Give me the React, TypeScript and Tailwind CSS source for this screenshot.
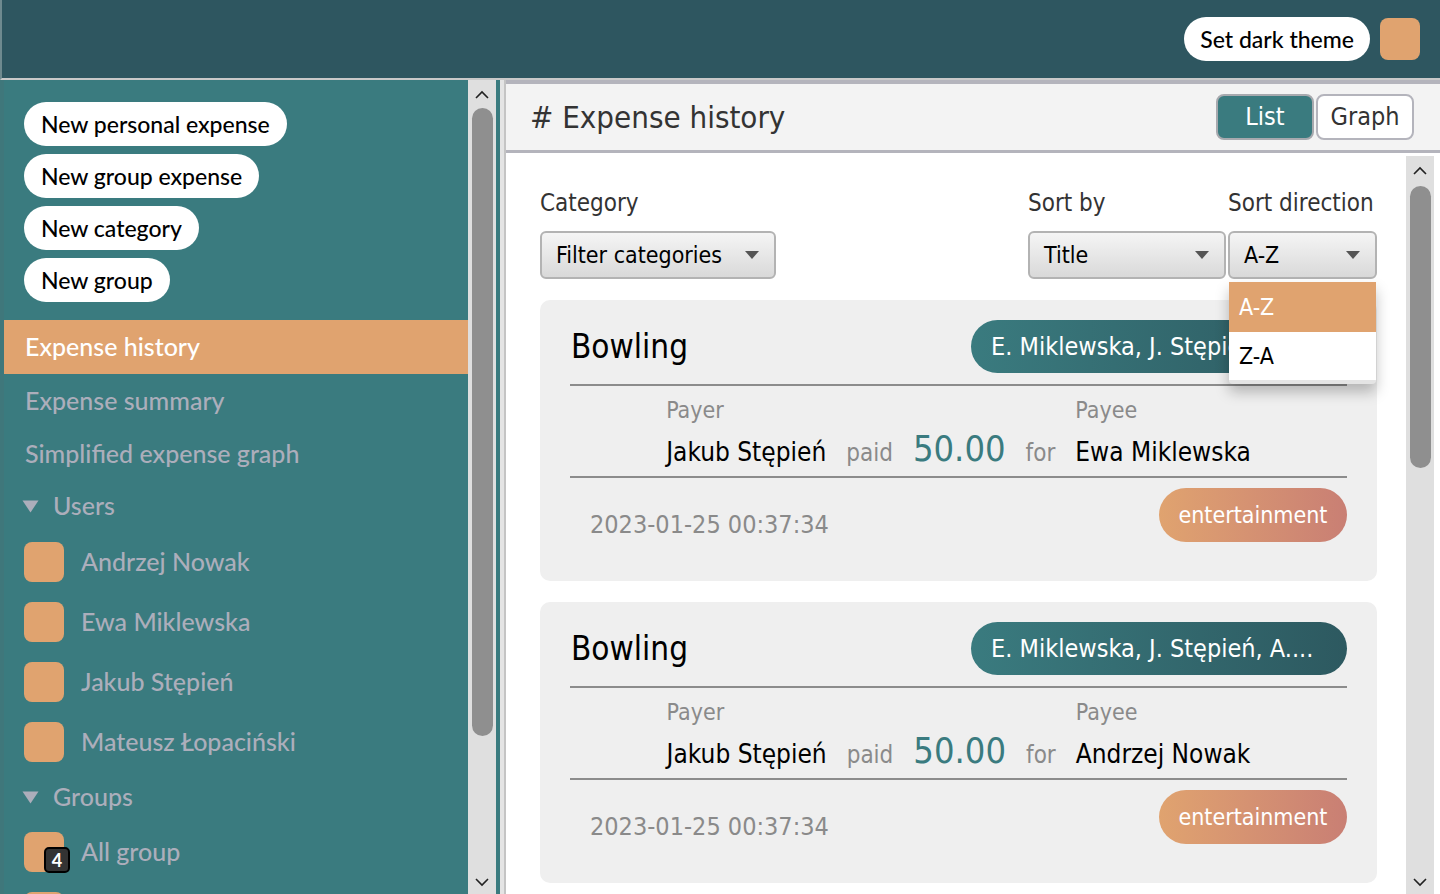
import React from "react";

const geo = "font-['Lato','Noto_Sans',sans-serif]";
const cond = "font-['Liberation_Sans_Narrow','DejaVu_Sans_Condensed','Roboto',sans-serif]";

const users = ["Andrzej Nowak", "Ewa Miklewska", "Jakub Stępień", "Mateusz Łopaciński"];

const expenses = [
    { title: "Bowling", who: "E. Miklewska, J. Stępień, A....", payer: "Jakub Stępień", payee: "Ewa Miklewska", amount: "50.00", date: "2023-01-25 00:37:34", category: "entertainment" },
    { title: "Bowling", who: "E. Miklewska, J. Stępień, A....", payer: "Jakub Stępień", payee: "Andrzej Nowak", amount: "50.00", date: "2023-01-25 00:37:34", category: "entertainment" },
];

function Caret({ className = "" }: { className?: string }) {
    return (
        <svg width="16" height="10" viewBox="0 0 16 10" className={className}>
            <path d="M1 1h14L8 9z" fill="currentColor" />
        </svg>
    );
}

// sidebar tree toggle, a bit taller than the select caret
function TreeCaret() {
    return (
        <svg width="17" height="13" viewBox="0 0 17 13" className="text-[#acaebb]">
            <path d="M0.5 0.5h16L8.5 12.5z" fill="currentColor" />
        </svg>
    );
}

function Chevron({ up }: { up?: boolean }) {
    return (
        <svg width="14" height="9" viewBox="0 0 14 9">
            <path d={up ? "M1 8l6-6 6 6" : "M1 1l6 6 6-6"} stroke="#222" strokeWidth="1.6" fill="none" />
        </svg>
    );
}

function Scrollbar({ thumbTop, thumbHeight }: { thumbTop: number; thumbHeight: number }) {
    return (
        <div className="w-[28px] h-full bg-[#dfdfdf] flex flex-col items-center shrink-0">
            <div className="h-[26px] flex items-center justify-center pt-[2px]">
                <Chevron up />
            </div>
            <div className="flex-1 w-full px-[3px] relative">
                <div
                    className="absolute left-[4px] right-[3px] rounded-full bg-[#8f8f8f]"
                    style={{ top: thumbTop, height: thumbHeight }}
                />
            </div>
            <div className="h-[24px] flex items-center justify-center">
                <Chevron />
            </div>
        </div>
    );
}

function Select({ label, width }: { label: string; width: string }) {
    return (
        <div
            className={`${width} h-[48px] rounded-md border-2 border-[#b3b3b3] bg-gradient-to-b from-[#f5f5f5] to-[#d9d9d9] flex items-center justify-between pl-[14px] pr-[14px] text-[23px] text-black`}
        >
            <span>{label}</span>
            <Caret className="text-[#555]" />
        </div>
    );
}

function ExpenseCard({ e }: { e: (typeof expenses)[number] }) {
    return (
        <div className="bg-[#efefef] rounded-[10px] px-[30px] pt-[20px] pb-[39px]">
            <div className="flex items-center justify-between h-[53px]">
                <span className="text-[33px] text-black pl-[1px]">{e.title}</span>
                <span className="h-[53px] w-[376px] rounded-full bg-gradient-to-r from-[#3a7b7f] to-[#2d5960] text-white text-[25px] flex items-center pl-[20px] whitespace-nowrap overflow-hidden">
                    {e.who}
                </span>
            </div>
            <div className="mt-[11px] h-[2px] bg-[#8c8c8c]" />
            <div className="h-[90px] pt-[9px] grid grid-cols-[auto_auto_auto_auto_auto] justify-center items-baseline gap-x-[20px]">
                <span className="text-[23px] leading-[30px] text-[#8a8a8a]">Payer</span>
                <span />
                <span />
                <span />
                <span className="text-[23px] leading-[30px] text-[#8a8a8a]">Payee</span>
                <span className="text-[26px] leading-[34px] text-black">{e.payer}</span>
                <span className="text-[24px] leading-[34px] text-[#8a8a8a]">paid</span>
                <span className="text-[36px] leading-[34px] text-[#3a7b7f]">{e.amount}</span>
                <span className="text-[24px] leading-[34px] text-[#8a8a8a]">for</span>
                <span className="text-[26px] leading-[34px] text-black">{e.payee}</span>
            </div>
            <div className="h-[2px] bg-[#8c8c8c]" />
            <div className="mt-[10px] flex justify-between items-start">
                <span className="pl-[20px] mt-[22px] text-[25px] leading-[30px] text-[#8a8a8a]">{e.date}</span>
                <span className="h-[54px] w-[188px] rounded-full bg-gradient-to-r from-[#e0a36f] to-[#c97f74] text-white text-[23px] flex items-center justify-center">
                    {e.category}
                </span>
            </div>
        </div>
    );
}

export default function App() {
    return (
        <div className="h-screen w-full flex flex-col overflow-hidden bg-white">
            {/* top bar */}
            <div className={`h-[80px] shrink-0 bg-[#2e5660] border-b-2 border-[#c9c9c9] border-l-2 border-l-[#6f8a8f] flex items-center justify-end pr-[20px] gap-[10px] ${geo}`}>
                <button className="h-[44px] px-[16px] rounded-full bg-white text-black text-[23px] font-medium">
                    Set dark theme
                </button>
                <div className="w-[40px] h-[42px] rounded-lg bg-[#e0a36f]" />
            </div>

            <div className="flex-1 flex min-h-0">
                {/* sidebar */}
                <div className={`w-[468px] shrink-0 bg-[#3a7b7f] border-l-4 border-l-[#3f777b] overflow-hidden ${geo}`}>
                    <div className="pt-[22px] pl-[20px] flex flex-col items-start gap-[8px]">
                        {["New personal expense", "New group expense", "New category", "New group"].map((t) => (
                            <button key={t} className="h-[44px] px-[17px] rounded-full bg-white text-black text-[23px] font-medium">
                                {t}
                            </button>
                        ))}
                    </div>
                    <div className="mt-[18px] text-[25px] font-medium">
                        <div className="h-[54px] bg-[#e0a36f] text-white flex items-center pl-[21px]">Expense history</div>
                        <div className="h-[54px] text-[#acaebb] flex items-center pl-[21px]">Expense summary</div>
                        <div className="h-[52px] text-[#acaebb] flex items-center pl-[21px]">Simplified expense graph</div>
                        <div className="h-[52px] text-[#acaebb] flex items-center pl-[18px] gap-[14px]">
                            <TreeCaret />
                            Users
                        </div>
                        <div className="flex flex-col gap-[20px] pt-[10px] pl-[20px]">
                            {users.map((u) => (
                                <div key={u} className="h-[40px] flex items-center gap-[17px] text-[#acaebb]">
                                    <div className="w-[40px] h-[40px] rounded-lg bg-[#e0a36f]" />
                                    {u}
                                </div>
                            ))}
                        </div>
                        <div className="h-[54px] mt-[8px] text-[#acaebb] flex items-center pl-[18px] gap-[14px]">
                            <TreeCaret />
                            Groups
                        </div>
                        <div className="flex flex-col gap-[20px] pt-[8px] pl-[20px]">
                            <div className="h-[40px] flex items-center gap-[17px] text-[#acaebb]">
                                <div className="relative w-[40px] h-[40px] rounded-lg bg-[#e0a36f]">
                                    <span className="absolute left-[20px] top-[15px] w-[26px] h-[26px] rounded-[5px] bg-[#333] border-2 border-black text-white text-[18px] font-bold flex items-center justify-center leading-none">
                                        4
                                    </span>
                                </div>
                                All group
                            </div>
                            <div className="h-[40px] flex items-center gap-[17px]">
                                <div className="w-[40px] h-[40px] rounded-lg bg-[#e0a36f]" />
                            </div>
                        </div>
                    </div>
                </div>
                <Scrollbar thumbTop={2} thumbHeight={628} />
                <div className="w-[4px] shrink-0 bg-[#3a7b7f]" />
                <div className="w-[6px] shrink-0 bg-[#e4e4e4] border-r-2 border-[#c4c4c4]" />

                {/* main */}
                <div className={`flex-1 flex flex-col min-w-0 ${cond}`}>
                    <div className="h-[73px] shrink-0 bg-[#f3f3f3] border-t-4 border-b-[3px] border-[#b4b4bc] flex items-center justify-between pl-[24px] pr-[26px]">
                        <h1 className="text-[31px] text-[#333]"># Expense history</h1>
                        <div className="flex gap-[2px]">
                            <button className="w-[98px] h-[46px] rounded-lg bg-[#3a7b7f] border-2 border-[#a7a9ae] text-white text-[25px]">
                                List
                            </button>
                            <button className="w-[98px] h-[46px] rounded-lg bg-white border-2 border-[#b4b4bc] text-[#333] text-[25px]">
                                Graph
                            </button>
                        </div>
                    </div>
                    <div className="flex-1 flex min-h-0">
                        <div className="flex-1 pl-[34px] pr-[29px] pt-[34px] overflow-hidden">
                            <div className="flex justify-between">
                                <div>
                                    <div className="h-[32px] text-[24px] leading-[32px] text-[#333]">Category</div>
                                    <div className="mt-[12px]">
                                        <Select label="Filter categories" width="w-[236px]" />
                                    </div>
                                </div>
                                <div className="flex gap-[2px]">
                                    <div className="w-[198px]">
                                        <div className="h-[32px] text-[24px] leading-[32px] text-[#333] whitespace-nowrap">Sort by</div>
                                        <div className="mt-[12px]">
                                            <Select label="Title" width="w-[198px]" />
                                        </div>
                                    </div>
                                    <div className="relative w-[149px]">
                                        <div className="h-[32px] text-[24px] leading-[32px] text-[#333] whitespace-nowrap">Sort direction</div>
                                        <div className="mt-[12px]">
                                            <Select label="A-Z" width="w-[149px]" />
                                        </div>
                                        <div className="absolute z-10 left-[1px] top-[95px] w-[147px] bg-white border-b-4 border-[#e4e4e4] rounded-b-sm shadow-[0_8px_14px_rgba(0,0,0,0.25)] text-[23px]">
                                            <div className="h-[50px] bg-[#e0a36f] text-white flex items-center pl-[10px]">A-Z</div>
                                            <div className="h-[48px] text-black flex items-center pl-[10px]">Z-A</div>
                                        </div>
                                    </div>
                                </div>
                            </div>
                            <div className="mt-[21px] flex flex-col gap-[21px]">
                                {expenses.map((e, i) => (
                                    <ExpenseCard key={i} e={e} />
                                ))}
                            </div>
                        </div>
                        <div className="h-full pt-[3px] flex">
                            <Scrollbar thumbTop={4} thumbHeight={282} />
                            <div className="w-[6px] bg-white" />
                        </div>
                    </div>
                </div>
            </div>
        </div>
    );
}
